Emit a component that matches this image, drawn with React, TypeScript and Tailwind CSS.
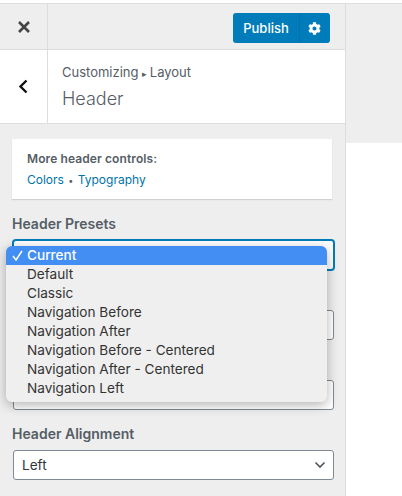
import { FaCog } from "react-icons/fa";

const options = [
  "Default",
  "Classic",
  "Navigation Before",
  "Navigation After",
  "Navigation Before - Centered",
  "Navigation After - Centered",
  "Navigation Left",
];

const Chevron = () => (
  <svg width="12" height="8" viewBox="0 0 12 8" fill="none" stroke="#50575e" strokeWidth="1.6">
    <path d="M1.5 1.5 6 6l4.5-4.5" />
  </svg>
);

const SelectBox = ({ label, focused }: { label?: string; focused?: boolean }) => (
  <div
    className={`flex h-[30px] w-[321px] items-center justify-between rounded-[3px] bg-white pl-[8px] pr-[7px] text-[13.6px] text-[#32373c] ${
      focused ? "border border-[#007cba] shadow-[0_0_0_1px_#007cba]" : "border border-[#7e8993]"
    }`}
  >
    <span>{label}</span>
    <Chevron />
  </div>
);

export default function App() {
  return (
    <div className="h-[496px] w-[402px] overflow-hidden bg-white font-['Inter',sans-serif]">
      <div className="h-[3px] bg-white" />
      <div className="flex items-start">
        <div className="relative h-[493px] w-[346px] border-r border-t border-[#ddd] bg-[#eee]">
          <div className="flex h-[46px] border-b border-[#ddd]">
            <div className="flex w-[48px] items-center justify-center border-r border-[#ddd]">
              <svg width="12" height="12" viewBox="0 0 12 12" stroke="#444" strokeWidth="2.6">
                <path d="M1 1l10 10M11 1 1 11" />
              </svg>
            </div>
            <div className="flex flex-1 items-start justify-end pr-[15px] pt-[9px]">
              <div className="flex h-[30px] w-[97px] items-center rounded-[3px] bg-[#007cba] pt-px text-[13px] font-medium text-white">
                <span className="flex h-full w-[67px] items-center justify-center border-r border-[#0073aa]">Publish</span>
                <span className="flex flex-1 items-center justify-center pr-[2px]">
                  <FaCog size={13} color="white" />
                </span>
              </div>
            </div>
          </div>

          <div className="flex h-[74px] border-b border-[#ddd] bg-white">
            <div className="flex w-[48px] items-center justify-center border-r border-[#ddd] pr-[2px]">
              <svg width="10" height="15" viewBox="0 0 10 15" fill="none" stroke="#111" strokeWidth="2.4">
                <path d="M8.5 1.5 2.5 7.5l6 6" />
              </svg>
            </div>
            <div className="pl-[14px] pt-[13px]">
              <div className="text-[13px] leading-[18px] text-[#555d66]">
                Customizing <span className="mr-[-1px] text-[9px]">▸</span> Layout
              </div>
              <div className="mt-[3px] text-[18px] font-light leading-[26px] text-[#555d66]">Header</div>
            </div>
          </div>

          <div className="pl-[12px] pt-[15px]">
            <div className="h-[60px] w-[320px] bg-white px-[15px] pt-[12px] shadow-[0_1px_1px_rgba(0,0,0,0.12)]">
              <div className="text-[12px] font-semibold leading-[16px] tracking-[0.1px] text-[#555d66]">More header controls:</div>
              <div className="mt-[5px] text-[12px] leading-[16px] text-[#555d66]">
                <span className="text-[#0073aa]">Colors</span> <span className="mx-px text-[9px]">•</span>{" "}
                <span className="text-[#0073aa]">Typography</span>
              </div>
            </div>

            <div className="mt-[16px] text-[14px] font-semibold leading-[18px] text-[#555d66]">Header Presets</div>
            <div className="ml-px mt-[7px]">
              <SelectBox focused />
            </div>
            <div className="ml-px mt-[40px]">
              <SelectBox />
            </div>
            <div className="ml-px mt-[40px]">
              <SelectBox />
            </div>
            <div className="mt-[15px] text-[14px] font-semibold leading-[18px] text-[#555d66]">Header Alignment</div>
            <div className="ml-px mt-[7px]">
              <SelectBox label="Left" />
            </div>
          </div>

          {/* native select popup lying over the controls */}
          <div className="absolute left-[6px] top-[242px] w-[321px] rounded-[6px] bg-[#efefef] pb-[4px] text-[13.6px] leading-[19px] text-[#333] shadow-[0_3px_12px_rgba(0,0,0,0.3)]">
            <div className="flex h-[19px] items-center rounded-t-[6px] bg-[#428ef2] font-medium text-white">
              <span className="flex w-[21px] justify-end pr-[4px]">
                <svg width="11" height="11" viewBox="0 0 11 11" fill="none" stroke="white" strokeWidth="1.5">
                  <path d="M1 6l3 4 6-9" />
                </svg>
              </span>
              <span>Current</span>
            </div>
            {options.map((o) => (
              <div key={o} className="pl-[21px]">
                {o}
              </div>
            ))}
          </div>
        </div>
        <div className="h-[140px] w-[56px] border-t border-[#ddd] bg-[#eee]" />
      </div>
    </div>
  );
}
